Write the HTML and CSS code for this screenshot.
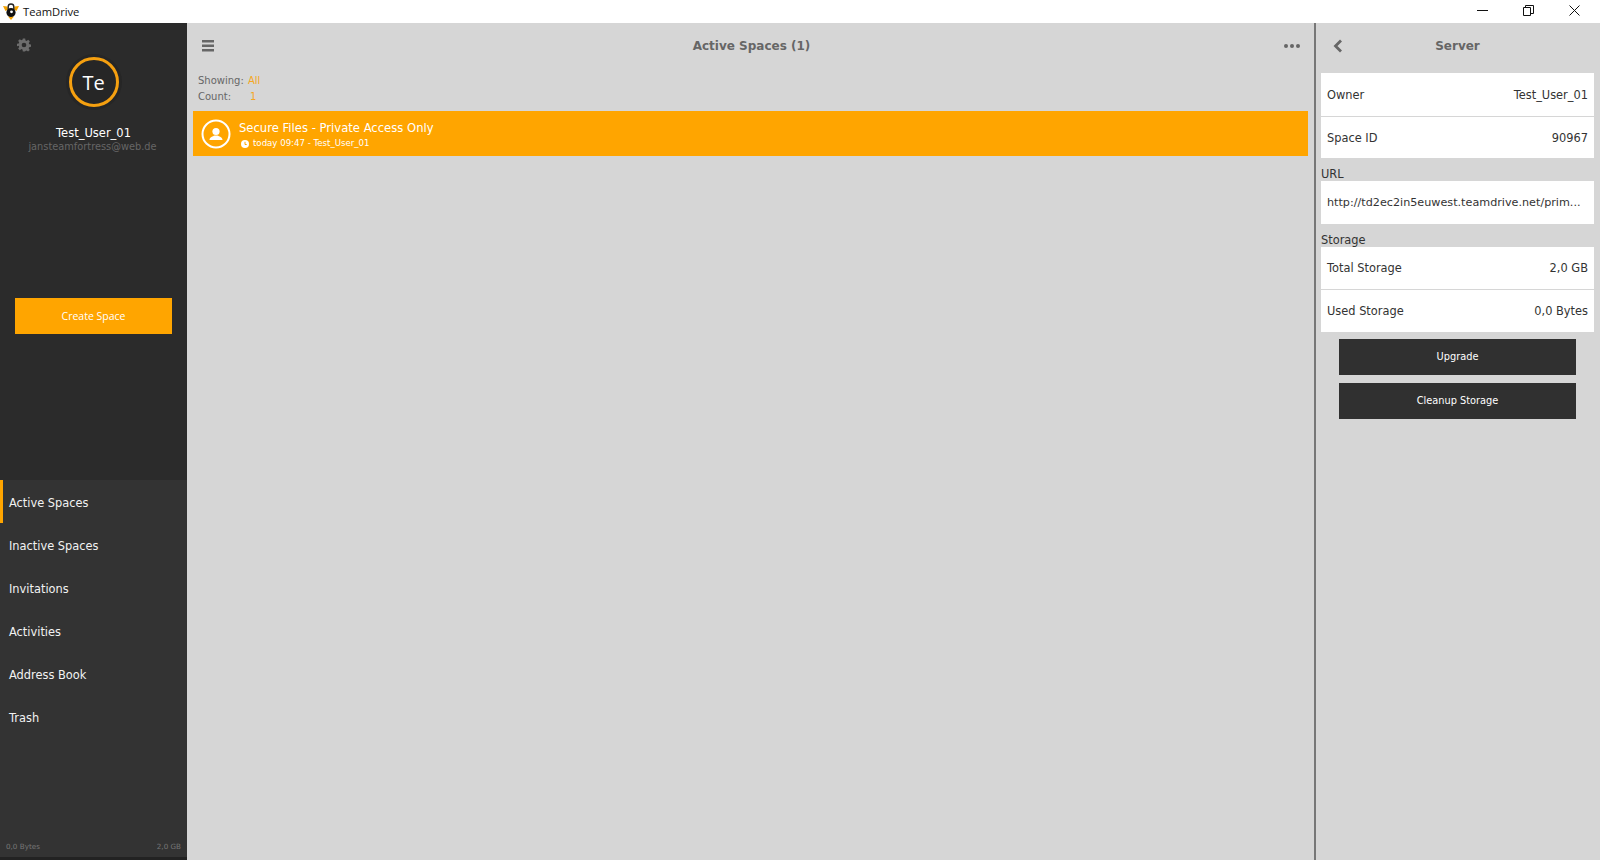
FILE: index.html
```html
<!DOCTYPE html>
<html lang="en">
<head>
<meta charset="utf-8">
<title>TeamDrive</title>
<link rel="stylesheet" href="styles.css">
</head>
<body>
<div class="app">
  <header class="titlebar">
    <div class="brand">
      <svg class="logo" width="18" height="18" viewBox="0 0 18 18"><path d="M1 3l4.500 .5 .5 3-2.500 1.500zM17 3l-4.500 .5-.5 3 2.500 1.500zM6 13.500h6l-3 3.500z" fill="#f5a300"/><circle cx="9" cy="9.500" r="4.600" fill="#111"/><path d="M6.200 6V3.800a2.800 2.800 0 0 1 5.600 0V6" fill="none" stroke="#222" stroke-width="1.400"/><circle cx="9.500" cy="8.800" r="1.400" fill="#fff"/></svg>
      <span>TeamDrive</span>
    </div>
    <div class="winctl">
      <svg width="11" height="11" viewBox="0 0 11 11"><path d="M0 5.500h11" stroke="#111" fill="none"/></svg>
      <svg width="11" height="11" viewBox="0 0 11 11"><path d="M.5 2.500h7v8h-7zM2.500 2.500v-2h8v8h-3" stroke="#111" fill="none"/></svg>
      <svg width="11" height="11" viewBox="0 0 11 11"><path d="M.5 .5l10 10M10.500 .5l-10 10" stroke="#111" fill="none"/></svg>
    </div>
  </header>
  <div class="body">
    <aside class="sidebar">
      <div class="profile">
        <svg class="gear" width="14" height="14" viewBox="0 0 24 24"><path fill="#6d6d6d" fill-rule="evenodd" d="M10 1h4l.6 3.200 1.900.8 2.700-1.800 2.800 2.800-1.800 2.700.8 1.900 3 .6v4l-3.200.6-.8 1.900 1.800 2.700-2.800 2.800-2.700-1.800-1.900.8L14 23h-4l-.6-3.200-1.900-.8-2.700 1.800-2.800-2.800 1.800-2.700-.8-1.900L0 14v-4l3-.6.8-1.900L2 4.800 4.800 2l2.700 1.800 1.900-.8zM12 8a4 4 0 1 0 0 8 4 4 0 0 0 0-8z"/></svg>
        <div class="avatar-halo"><div class="avatar">Te</div></div>
        <div class="username">Test_User_01</div>
        <div class="email">jansteamfortress@web.de</div>
        <button class="create">Create Space</button>
      </div>
      <nav class="nav">
        <div class="nav-item active">Active Spaces</div>
        <div class="nav-item">Inactive Spaces</div>
        <div class="nav-item">Invitations</div>
        <div class="nav-item">Activities</div>
        <div class="nav-item">Address Book</div>
        <div class="nav-item">Trash</div>
        <div class="usage"><span>0,0 Bytes</span><span>2,0 GB</span></div>
      </nav>
      <div class="sidefoot"></div>
    </aside>
    <main class="main">
      <div class="main-head">
        <svg width="13" height="12" viewBox="0 0 13 12"><path d="M0 0h12v2.500H0zM0 4.500h12V7H0zM0 9h12v2.500H0z" fill="#666"/></svg>
        <h1>Active Spaces (1)</h1>
        <svg width="16" height="4" viewBox="0 0 16 4"><circle cx="2" cy="2" r="2" fill="#666"/><circle cx="8" cy="2" r="2" fill="#666"/><circle cx="14" cy="2" r="2" fill="#666"/></svg>
      </div>
      <div class="filters">
        <div class="filter"><span class="flabel">Showing:</span><span class="fval">All</span></div>
        <div class="filter"><span class="flabel">Count:</span><span class="fval count">1</span></div>
      </div>
      <div class="space">
        <svg width="30" height="30" viewBox="0 0 30 30"><circle cx="15" cy="15" r="13.500" fill="none" stroke="#fff" stroke-width="2"/><circle cx="15" cy="12.500" r="3.600" fill="#fff"/><path d="M8.500 21c0-3 3.500-3.500 5-4.500h3c1.500 1 5 1.500 5 4.500z" fill="#fff"/></svg>
        <div class="space-text">
          <div class="space-title">Secure Files - Private Access Only</div>
          <div class="space-meta">
            <svg width="8" height="8" viewBox="0 0 8 8"><circle cx="4" cy="4" r="4" fill="#fff"/><path d="M4 1.800V4.500h1.700" stroke="#ffa500" fill="none"/></svg>
            <span>today 09:47 - Test_User_01</span>
          </div>
        </div>
      </div>
    </main>
    <section class="detail">
      <div class="detail-head">
        <svg width="10" height="14" viewBox="0 0 10 14"><path d="M8 1.500L2.500 7 8 12.500" fill="none" stroke="#666" stroke-width="2.800"/></svg>
        <h2>Server</h2>
      </div>
      <div class="card">
        <div class="row"><span>Owner</span><span>Test_User_01</span></div>
        <div class="row"><span>Space ID</span><span>90967</span></div>
      </div>
      <div class="section-label">URL</div>
      <div class="card"><div class="row"><span class="url">http://td2ec2in5euwest.teamdrive.net/prim...</span></div></div>
      <div class="section-label">Storage</div>
      <div class="card">
        <div class="row"><span>Total Storage</span><span>2,0 GB</span></div>
        <div class="row"><span>Used Storage</span><span>0,0 Bytes</span></div>
      </div>
      <div class="actions">
        <button class="dark">Upgrade</button>
        <button class="dark">Cleanup Storage</button>
      </div>
    </section>
  </div>
</div>
</body>
</html>
```
FILE: styles.css
```css
* { box-sizing: border-box; }
html, body { margin: 0; height: 100%; overflow: hidden; }
body { font-family: "DejaVu Sans", sans-serif; font-size: 12px; color: #333; background: #d6d6d6; }
.app { display: flex; flex-direction: column; height: 860px; }
.titlebar { height: 23px; flex: none; background: #fff; display: flex; justify-content: space-between; align-items: center; }
.brand { display: flex; align-items: center; gap: 3px; padding-left: 2px; font-size: 11.200px; color: #111; font-family: "Open Sans", sans-serif; }
.winctl { display: flex; gap: 35px; padding: 0 20px 3px 0; align-items: center; }
.body { flex: 1; display: flex; min-height: 0; }
.sidebar { width: 187px; flex: none; display: flex; flex-direction: column; background: #2b2b2b; color: #fff; }
.profile { height: 457px; flex: none; display: flex; flex-direction: column; align-items: center; position: relative; }
.gear { position: absolute; left: 17px; top: 15px; }
.avatar-halo { margin-top: 31px; width: 56px; height: 56px; border-radius: 50%; background: #262626; display: flex; align-items: center; justify-content: center; }
.avatar { width: 50px; height: 50px; border-radius: 50%; border: 3px solid #f5a010; font-family: "Open Sans", sans-serif; font-size: 20px; display: flex; align-items: center; justify-content: center; color: #fff; }
.username { margin-top: 16px; font-size: 11.500px; line-height: 14px; color: #fff; }
.email { font-size: 9.800px; line-height: 13px; color: #666; padding-right: 2px; }
.create { margin-top: 145px; width: 157px; height: 36px; border: 0; background: #ffa500; color: #fff; font-family: "Open Sans", sans-serif; font-size: 10.500px; }
.nav { flex: 1; background: #333; display: flex; flex-direction: column; }
.nav-item { height: 43px; flex: none; display: flex; align-items: center; padding: 2px 0 0 9px; font-size: 11.400px; color: #f2f2f2; }
.nav-item.active { box-shadow: inset 3px 0 0 #ffa500; }
.usage { margin-top: auto; display: flex; justify-content: space-between; padding: 0 6px 6px; font-size: 7.200px; color: #777; }
.sidefoot { height: 3px; flex: none; background: #222; }
.main { flex: 1; min-width: 0; background: #d6d6d6; padding: 0 6px; }
.main-head { height: 44px; display: flex; align-items: center; justify-content: space-between; padding: 1px 8px 0 9px; }
.main-head h1 { margin: 0 0 0 4px; font-size: 12px; font-weight: bold; color: #666; }
.filters { display: flex; flex-direction: column; font-size: 10px; line-height: 16px; color: #666; padding: 6px 0 0 5px; height: 44px; }
.filter { display: flex; }
.flabel { width: 50px; }
.fval { color: #f5a623; }
.fval.count { padding-left: 2px; }
.space { height: 45px; background: #ffa500; display: flex; align-items: center; gap: 8px; padding: 0 0 0 8px; color: #fff; }
.space-text { padding-top: 6px; }
.space-title { font-size: 11.600px; line-height: 15px; margin-top: -1px; }
.space-meta { display: flex; align-items: center; gap: 4px; font-size: 8.600px; line-height: 15px; padding-left: 2px; }
.detail { width: 286px; flex: none; border-left: 2px solid #777; background: #d6d6d6; padding: 0 6px 0 5px; }
.detail-head { height: 50px; display: flex; align-items: center; padding: 0 0 5px 12px; }
.detail-head h2 { flex: 1; margin: 0; padding-right: 22px; text-align: center; font-size: 12px; font-weight: bold; color: #666; }
.card { background: #fff; }
.row { height: 42.500px; display: flex; align-items: center; justify-content: space-between; padding: 1px 6px 0; font-size: 11.400px; color: #333; }
.row + .row { border-top: 1px solid #d6d6d6; }
.section-label { height: 23px; padding-top: 8px; line-height: 16px; font-size: 11.400px; color: #333; }
.url { white-space: nowrap; font-size: 11.200px; }
.actions { display: flex; flex-direction: column; align-items: center; gap: 8px; margin-top: 7px; }
.dark { width: 237px; height: 36px; border: 0; background: #303030; color: #fff; font-family: "DejaVu Sans", sans-serif; font-size: 9.800px; }
```
